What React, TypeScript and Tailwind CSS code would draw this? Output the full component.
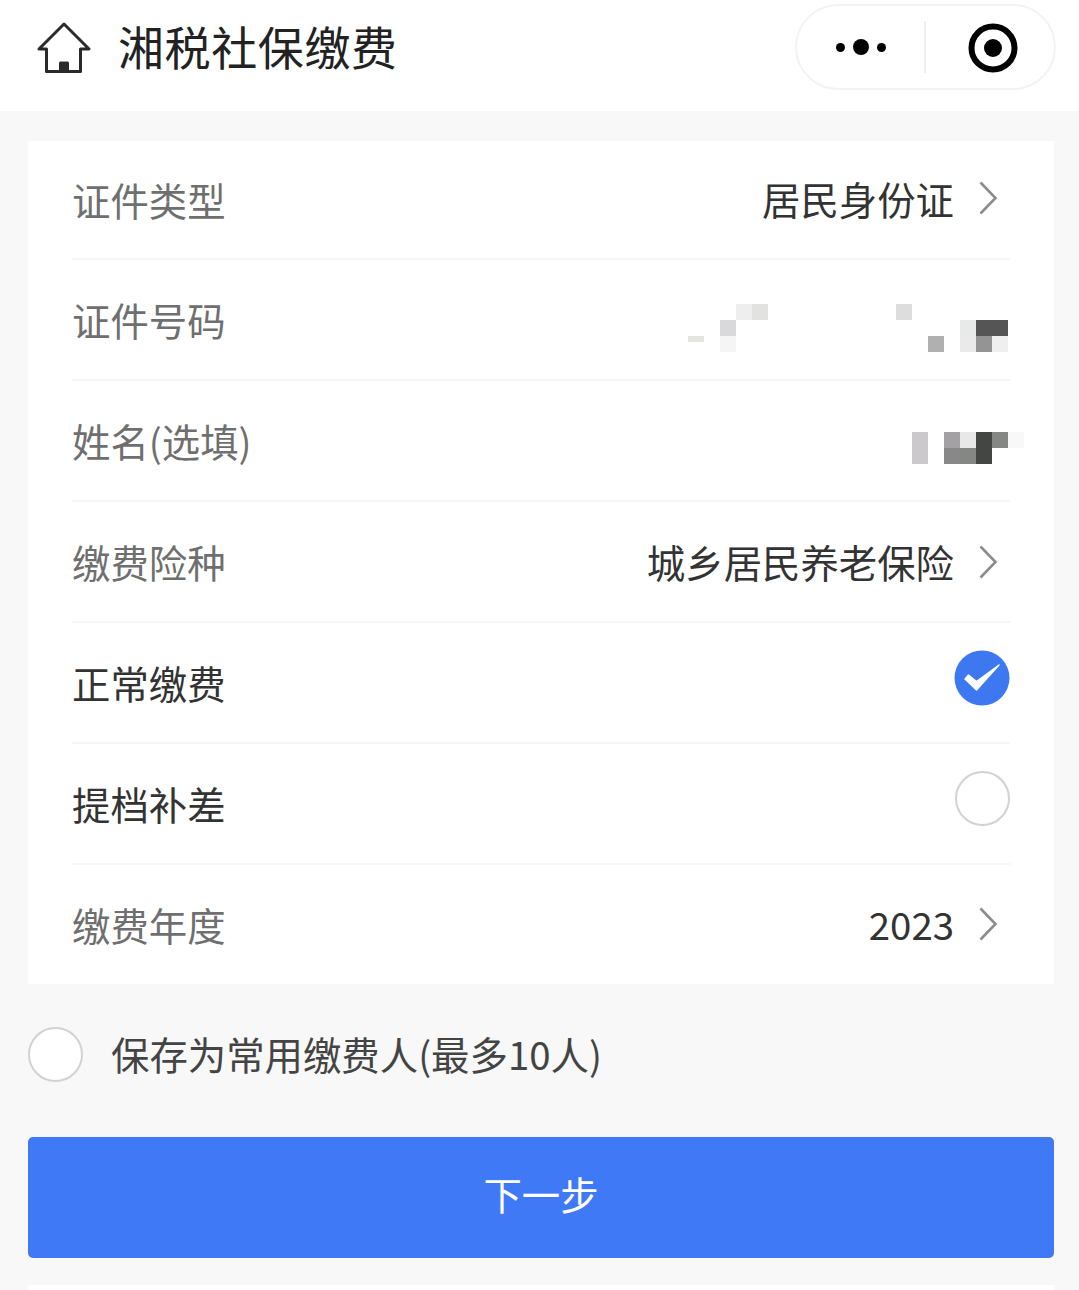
import React from "react";

const font = "font-['Noto_Sans_CJK_SC','Noto_Sans',sans-serif]";

// mosaic cells: [grid place, colour class], columns are 16px wide
const idCells: [string, string][] = [
  ["col-start-4 row-start-1", "bg-[#eeeeee]"],
  ["col-start-5 row-start-1", "bg-[#e2e3e0]"],
  ["col-start-14 row-start-1", "bg-[#dddddd]"],
  ["col-start-3 row-start-2", "bg-[#d9d8da]"],
  ["col-start-18 row-start-2", "bg-[#e8eaea]"],
  ["col-start-19 row-start-2", "bg-[#555555]"],
  ["col-start-20 row-start-2", "bg-[#555555]"],
  ["col-start-1 row-start-3 h-[6px]", "bg-[#e4e5e0]"],
  ["col-start-3 row-start-3", "bg-[#f5f5f5]"],
  ["col-start-16 row-start-3", "bg-[#b0b0b0]"],
  ["col-start-18 row-start-3", "bg-[#eaeaea]"],
  ["col-start-19 row-start-3", "bg-[#949494]"],
  ["col-start-20 row-start-3", "bg-[#efefef]"],
];

const nameCells: [string, string][] = [
  ["col-start-1 row-start-1", "bg-[#cbc9cc]"],
  ["col-start-3 row-start-1", "bg-[#a3a1a3]"],
  ["col-start-4 row-start-1", "bg-[#e8e8e8]"],
  ["col-start-5 row-start-1", "bg-[#444644]"],
  ["col-start-6 row-start-1", "bg-[#858785]"],
  ["col-start-7 row-start-1", "bg-[#f8f8f8]"],
  ["col-start-1 row-start-2", "bg-[#cbc9cc]"],
  ["col-start-3 row-start-2", "bg-[#888888]"],
  ["col-start-4 row-start-2", "bg-[#858785]"],
  ["col-start-5 row-start-2", "bg-[#444644]"],
];

function Chevron({ className }: { className: string }) {
  return (
    <svg width="20" height="36" viewBox="0 0 20 36" className={`ml-[24px] mr-[12px] shrink-0 ${className}`}>
      <path d="M2.5 2.5 L17.5 18 L2.5 33.5" fill="none" stroke="#8c8c8c" strokeWidth="2.6" />
    </svg>
  );
}

function Mosaic({ cells, className }: { cells: [string, string][]; className: string }) {
  return (
    <div className={className}>
      {cells.map(([place, color]) => (
        <div key={place} className={`${place} ${color}`} />
      ))}
    </div>
  );
}

function Circle({ checked }: { checked?: boolean }) {
  if (checked) {
    return (
      <svg width="56" height="56" viewBox="0 0 56 56" className="shrink-0">
        <circle cx="28" cy="28" r="27.5" fill="#3e78f0" />
        <path d="M11 29 L14.5 25 L22.5 31.5 L45 15 L22.5 40 Z" fill="#ffffff" stroke="#ffffff" strokeWidth="1.4" strokeLinejoin="round" />
      </svg>
    );
  }
  return <div className="w-[55px] h-[55px] rounded-full border-2 border-[#d2d2d2] bg-white shrink-0" />;
}

function Row({
  label,
  dark,
  last,
  first,
  children,
}: {
  label: string;
  dark?: boolean;
  last?: boolean;
  first?: boolean;
  children?: React.ReactNode;
}) {
  return (
    <div
      className={`flex items-center justify-between ${first || last ? "h-[119px]" : "h-[121px]"} ${last ? "" : "border-b-2 border-[#f6f6f6]"}`}
    >
      <span className={`text-[38.4px] leading-none pb-[1px] ${dark ? "text-[#333333]" : "text-[#6f6f6f]"}`}>{label}</span>
      {children}
    </div>
  );
}

export default function App() {
  return (
    <div className={`${font} w-[1079px] h-[1290px] overflow-hidden bg-[#f8f8f8]`}>
      <header className="h-[111px] bg-white flex items-start justify-between pl-[37px] pr-[23px]">
        <div className="flex items-center h-[95px]">
          <svg width="54" height="52" viewBox="0 0 54 52" className="shrink-0">
            <path
              d="M27 2 L52 27 H43.5 V49.5 H9.5 V27 H2 Z M23.5 49.5 V41 H30.5 V49.5"
              fill="none"
              stroke="#2a2a2a"
              strokeWidth="3"
              strokeLinejoin="round"
            />
            <rect x="23.5" y="41" width="7" height="8" fill="#2a2a2a" />
          </svg>
          <h1 className="ml-[27px] pb-[6px] text-[46px] leading-none text-[#222222] font-normal tracking-[0.6px]">湘税社保缴费</h1>
        </div>
        <div className="mt-[4px] w-[261px] h-[86px] rounded-full border-2 border-[#f3f3f3] flex items-center">
          <div className="w-[127px] flex items-center justify-center gap-[8px]">
            <span className="w-[9px] h-[9px] rounded-full bg-black" />
            <span className="w-[16px] h-[16px] rounded-full bg-black" />
            <span className="w-[9px] h-[9px] rounded-full bg-black" />
          </div>
          <div className="w-[2px] h-[52px] bg-[#eeeeee]" />
          <div className="flex-1 flex items-center justify-center pl-[6px] pt-[2px]">
            <svg width="50" height="50" viewBox="0 0 50 50">
              <circle cx="25" cy="25" r="21.5" fill="none" stroke="#000000" strokeWidth="6" />
              <circle cx="25" cy="25" r="9" fill="#000000" />
            </svg>
          </div>
        </div>
      </header>

      <main className="pl-[28px] pr-[25px]">
        <section className="mt-[30px] bg-white px-[44px]">
          <Row label="证件类型" first>
            <div className="flex items-center text-[38.4px] leading-none text-[#333333]">
              <span className="pb-[3px]">居民身份证</span>
              <Chevron className="mb-[3px]" />
            </div>
          </Row>
          <Row label="证件号码">
            <Mosaic
              cells={idCells}
              className="grid grid-cols-[repeat(20,16px)] grid-rows-[repeat(3,16px)] mr-[2px] mt-[17px]"
            />
          </Row>
          <Row label="姓名(选填)">
            <Mosaic
              cells={nameCells}
              className="grid grid-cols-[repeat(7,16px)] grid-rows-[repeat(2,16px)] mr-[-14px] mt-[15px]"
            />
          </Row>
          <Row label="缴费险种">
            <div className="flex items-center text-[38.4px] leading-none text-[#333333]">
              <span className="pb-[1px]">城乡居民养老保险</span>
              <Chevron className="mt-[1px]" />
            </div>
          </Row>
          <Row label="正常缴费" dark>
            <div className="mb-[10px]">
              <Circle checked />
            </div>
          </Row>
          <Row label="提档补差" dark>
            <div className="mb-[10px]">
              <Circle />
            </div>
          </Row>
          <Row label="缴费年度" last>
            <div className="flex items-center text-[38.4px] leading-none text-[#333333]">
              <span className="pb-[2px]">2023</span>
              <Chevron className="mb-[1px]" />
            </div>
          </Row>
        </section>

        <label className="mt-[43px] flex items-center gap-[28px]">
          <Circle />
          <span className="text-[38.4px] leading-none text-[#444444] pb-[3px]">保存为常用缴费人(最多10人)</span>
        </label>

        <button className="mt-[55px] w-full h-[121px] rounded-[5px] bg-[#4079f5] text-white text-[38.4px] leading-none pb-[9px]">
          下一步
        </button>

        <div className="mt-[27px] h-[6px] bg-white" />
      </main>
    </div>
  );
}
